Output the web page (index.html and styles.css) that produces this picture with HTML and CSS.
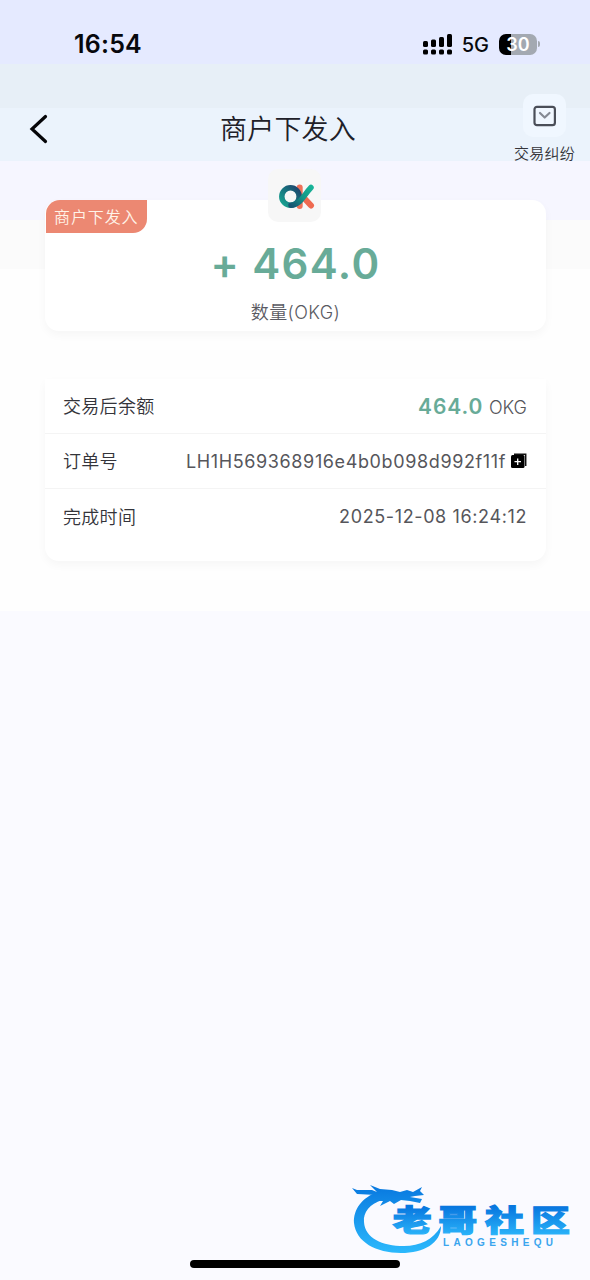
FILE: index.html
```html
<!DOCTYPE html>
<html lang="zh-CN">
<head>
  <meta charset="UTF-8">
  <meta name="viewport" content="width=device-width, initial-scale=1.0">
  <title>商户下发入</title>
  <link rel="stylesheet" href="styles.css">
</head>
<body>
  <div class="status-bar">
    <div class="time">16:54</div>
    <div class="status-right">
      <svg class="signal" width="30" height="21" viewBox="0 0 30 21">
        <rect x="0" y="7" width="5" height="6" rx="1.500"/>
        <rect x="8" y="5.500" width="5" height="7.500" rx="1.500"/>
        <rect x="16" y="3" width="5" height="10" rx="1.500"/>
        <rect x="24" y="0" width="5" height="13" rx="1.500"/>
        <rect x="0" y="15.500" width="5" height="5" rx="1.500"/>
        <rect x="8" y="15.500" width="5" height="5" rx="1.500"/>
        <rect x="16" y="15.500" width="5" height="5" rx="1.500"/>
        <rect x="24" y="15.500" width="5" height="5" rx="1.500"/>
      </svg>
      <span class="network">5G</span>
      <div class="battery">30</div>
      <div class="battery-cap"></div>
    </div>
  </div>

  <header class="nav">
    <svg class="back" width="20" height="30" viewBox="0 0 20 30">
      <path d="M17.500 2.500 L4 15 L17.500 27.500" fill="none" stroke="#050508" stroke-width="3.200" stroke-linecap="round"/>
    </svg>
    <h1>商户下发入</h1>
    <div class="dispute">
      <div class="dispute-icon">
        <svg width="24" height="22" viewBox="0 0 24 22" fill="none">
          <rect x="1.500" y="1.800" width="20.400" height="18.400" rx="2.500" stroke="#4a4e58" stroke-width="2.200"/>
          <path d="M7 8 L11.700 12.500 L16.500 8" stroke="#858a94" stroke-width="2.200" stroke-linecap="round" stroke-linejoin="round"/>
        </svg>
      </div>
      <span>交易纠纷</span>
    </div>
  </header>

  <main>
    <section class="card amount-card">
      <div class="badge">商户下发入</div>
      <div class="coin">
        <svg width="36" height="26" viewBox="0 0 36 26" fill="none" stroke-linecap="round">
          <defs>
            <linearGradient id="ring" x1="0" y1="1" x2="1" y2="0">
              <stop offset="0" stop-color="#18a591"/>
              <stop offset=".55" stop-color="#17717e"/>
              <stop offset="1" stop-color="#20426b"/>
            </linearGradient>
            <linearGradient id="arm" x1="0" y1="1" x2="1" y2="0">
              <stop offset="0" stop-color="#175572"/>
              <stop offset=".5" stop-color="#159486"/>
              <stop offset="1" stop-color="#18b397"/>
            </linearGradient>
          </defs>
          <path d="M20.700 3.500 V22" stroke="#ef725a" stroke-width="6"/>
          <path d="M25 14 L32 21.500" stroke="#ef6a50" stroke-width="6"/>
          <circle cx="11.500" cy="12.500" r="8.700" stroke="url(#ring)" stroke-width="5.500"/>
          <path d="M12 21.200 C21 21.200 24 12 32 3.500" stroke="url(#arm)" stroke-width="5.500"/>
        </svg>
      </div>
      <div class="amount">+ 464.0</div>
      <div class="unit">数量(OKG)</div>
    </section>

    <section class="card detail-card">
      <div class="row">
        <span class="label">交易后余额</span>
        <span class="value"><b>464.0</b> <span class="okg">OKG</span></span>
      </div>
      <div class="row">
        <span class="label">订单号</span>
        <span class="value order">LH1H569368916e4b0b098d992f11f
          <svg class="copy" width="16" height="16" viewBox="0 0 16 16">
            <path d="M3 1.200 H14.700 V13" fill="none" stroke="#111" stroke-width="1.500"/>
            <rect x="0" y="2" width="13.500" height="13" rx="1.500" fill="#000"/>
            <path d="M6.700 5.500 V12 M3.500 8.700 H10" stroke="#fff" stroke-width="1.300"/>
          </svg>
        </span>
      </div>
      <div class="row">
        <span class="label">完成时间</span>
        <span class="value date">2025-12-08 16:24:12</span>
      </div>
    </section>
  </main>

  <div class="home-bar"></div>

  <svg class="watermark" width="250" height="100" viewBox="0 0 250 100">
    <defs>
      <linearGradient id="blue" gradientUnits="userSpaceOnUse" x1="0" y1="15" x2="0" y2="82">
        <stop offset="0" stop-color="#0878df"/>
        <stop offset="1" stop-color="#2bb8fc"/>
      </linearGradient>
      <linearGradient id="word" gradientUnits="userSpaceOnUse" x1="0" y1="37" x2="0" y2="66">
        <stop offset="0" stop-color="#0877df"/>
        <stop offset="1" stop-color="#2bb5fa"/>
      </linearGradient>
    </defs>
    <!-- dragon body and head -->
    <path fill="url(#blue)" d="M38 22 C22 27 13 40 14 53 C16 72 36 83 61 83 C84 83 101 73 101 56 C93 70 80 76 64 76 C42 76 25 68 24 52 C23 42 30 34 42 30 Z"/>
    <path fill="url(#blue)" d="M12 18 L17 20 L32 20 L37 22 L30 15 L40 19 L52 20 L60 22 L67 20 L73 22 L82 17 L80 21 L84 25 L75 26 L70 27 L82 29 L80 33 L70 31 L61 30 L54 34 L50 31 L40 36 L43 31 L35 31 L36 25 L17 24 Z"/>
    <g class="wm-name" fill="url(#word)" stroke="url(#word)" transform="scale(1.3 1)">
      <text x="40.500" y="61.500">老</text>
      <text x="75.500" y="61.500">哥</text>
      <text x="111.500" y="61.500">社</text>
      <text x="147" y="61.500">区</text>
    </g>
    <text class="wm-sub" x="103" y="76" textLength="110">LAOGESHEQU</text>
  </svg>
</body>
</html>
```

FILE: styles.css
```css
* {
  box-sizing: border-box;
}
body {
  margin: 0;
  height: 1280px;
  display: flex;
  flex-direction: column;
  position: relative;
  overflow: hidden;
  font-family: Inter, "Noto Sans CJK SC", sans-serif;
  color: #34343a;
  background: linear-gradient(to bottom,
    #e5eaff 0 64px,
    #e7eff7 64px 108px,
    #ebf3fc 108px 161px,
    #f6f6ff 161px 220px,
    #fbfbfb 220px 269px,
    #fefefe 269px 611px,
    #fafaff 611px);
}
.status-bar {
  height: 88px;
  padding: 0 50px 0 74px;
  display: flex;
  align-items: center;
  justify-content: space-between;
  color: #07080c;
}
.time {
  font-size: 25px;
  font-weight: 600;
  letter-spacing: 0.2px;
}
.status-right {
  display: flex;
  align-items: center;
}
.network {
  margin: 2px 10px 0 9px;
  font-size: 20px;
  font-weight: 500;
}
.battery {
  width: 38px;
  height: 21px;
  border-radius: 7px;
  background: linear-gradient(to right, #000 12px, #a3a9b1 12px);
  color: #fff;
  font-size: 18px;
  font-weight: 600;
  line-height: 21px;
  text-align: center;
}
.battery-cap {
  width: 2px;
  height: 6px;
  margin-left: 1px;
  border-radius: 0 2px 2px 0;
  background: #a3a9b1;
}
.nav {
  height: 81px;
  padding: 0 15px 0 28px;
  display: grid;
  grid-template-columns: 61px 1fr 61px;
  align-items: center;
}
.nav h1 {
  margin: 2px 0 0 -27px;
  font-size: 27px;
  font-weight: 350;
  line-height: 40px;
  letter-spacing: 0.2px;
  text-align: center;
  color: #202028;
}
.dispute {
  padding-top: 1px;
  display: flex;
  flex-direction: column;
  align-items: center;
  font-size: 15px;
  font-weight: 350;
  line-height: 20px;
  letter-spacing: 0.3px;
  white-space: nowrap;
}
.dispute-icon {
  width: 43px;
  height: 43px;
  margin-bottom: 7px;
  display: flex;
  align-items: center;
  justify-content: center;
  border-radius: 10px;
  background: #f0f7ff;
}
main {
  padding: 31px 44px 0 45px;
}
.card {
  background: #fff;
  border-radius: 14px;
  box-shadow: 0 4px 10px rgba(0, 0, 0, 0.035);
}
.amount-card {
  position: relative;
  height: 131px;
  padding-top: 38px;
  text-align: center;
}
.badge {
  position: absolute;
  top: 0;
  left: 1px;
  width: 101px;
  height: 33px;
  padding-left: 8px;
  border-radius: 14px 0 14px 0;
  background: #ec8872;
  color: #fff3e8;
  font-size: 16px;
  font-weight: 350;
  line-height: 34px;
  letter-spacing: 0.9px;
  text-align: left;
}
.coin {
  position: absolute;
  top: -31px;
  left: 223px;
  width: 53px;
  height: 53px;
  padding: 2px 0 0 5px;
  display: flex;
  align-items: center;
  justify-content: center;
  border-radius: 10px;
  background: #f7f7f7;
}
.amount {
  color: #68ab98;
  font-size: 42px;
  font-weight: 600;
  line-height: 52px;
  letter-spacing: 1.4px;
}
.unit {
  margin-top: 9px;
  font-size: 18px;
  line-height: 28px;
  font-weight: 350;
  letter-spacing: 0.4px;
  color: #5a5a62;
}
.detail-card {
  height: 182px;
  margin-top: 48px;
  border-radius: 0 0 14px 14px;
}
.row {
  height: 55px;
  padding: 0 19px 0 18px;
  display: flex;
  align-items: center;
  justify-content: space-between;
  border-bottom: 1px solid #f4f4f4;
}
.row:last-child {
  border-bottom: none;
}
.label {
  margin-top: -2px;
  font-size: 18px;
  font-weight: 350;
  letter-spacing: 0.3px;
}
.value {
  font-size: 18px;
  letter-spacing: 0.62px;
  color: #56565b;
}
.value b {
  color: #68ab98;
  font-size: 21px;
  font-weight: 600;
  letter-spacing: 0.9px;
}
.okg {
  font-weight: 300;
  letter-spacing: 0;
}
.order {
  display: flex;
  align-items: center;
  gap: 5px;
}
.home-bar {
  width: 210px;
  height: 8px;
  margin: auto auto 12px;
  border-radius: 4px;
  background: #000;
}
.watermark {
  position: absolute;
  left: 340px;
  top: 1170px;
}
.wm-name {
  font-family: "Noto Sans CJK SC", sans-serif;
  font-size: 30px;
  font-weight: 900;
  stroke-width: 1.2px;
}
.wm-sub {
  font-family: "Liberation Sans", sans-serif;
  font-size: 10px;
  font-weight: bold;
  fill: #3aa5ee;
}
```
